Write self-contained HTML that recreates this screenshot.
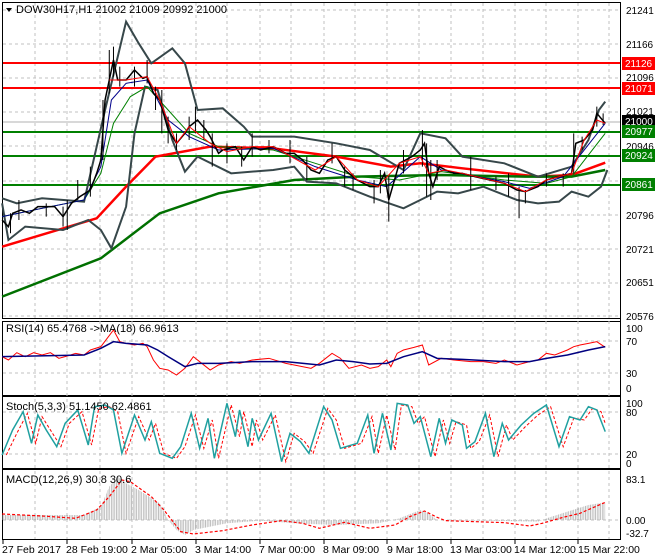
<!DOCTYPE html>
<html><head><meta charset="utf-8"><style>
html,body{margin:0;padding:0;background:#fff;}
svg{display:block;font-family:"Liberation Sans",sans-serif;}
</style></head><body>
<svg width="660" height="560" viewBox="0 0 660 560" xmlns="http://www.w3.org/2000/svg">
<defs>
<pattern id="hist" width="4" height="10" patternUnits="userSpaceOnUse"><rect x="0" y="0" width="2" height="10" fill="#b8b8b8"/></pattern>
</defs>
<rect width="660" height="560" fill="#fff"/>
<!-- panel borders -->
<g fill="none" stroke="#000" stroke-width="1">
<rect x="2.5" y="2.5" width="618" height="316"/>
<rect x="2.5" y="321.5" width="618" height="74"/>
<rect x="2.5" y="396.5" width="618" height="72"/>
<rect x="2.5" y="469.5" width="618" height="70"/>
</g>
<!-- grid -->
<g stroke="#c0c0c0" stroke-dasharray="3,3" stroke-width="1">
<line x1="35" y1="3" x2="35" y2="539"/><line x1="67" y1="3" x2="67" y2="539"/><line x1="100" y1="3" x2="100" y2="539"/><line x1="132" y1="3" x2="132" y2="539"/><line x1="164" y1="3" x2="164" y2="539"/><line x1="196" y1="3" x2="196" y2="539"/><line x1="227" y1="3" x2="227" y2="539"/><line x1="260" y1="3" x2="260" y2="539"/><line x1="291" y1="3" x2="291" y2="539"/><line x1="324" y1="3" x2="324" y2="539"/><line x1="355" y1="3" x2="355" y2="539"/><line x1="387" y1="3" x2="387" y2="539"/><line x1="419" y1="3" x2="419" y2="539"/><line x1="451" y1="3" x2="451" y2="539"/><line x1="483" y1="3" x2="483" y2="539"/><line x1="515" y1="3" x2="515" y2="539"/><line x1="546" y1="3" x2="546" y2="539"/><line x1="578" y1="3" x2="578" y2="539"/><line x1="609" y1="3" x2="609" y2="539"/>
<line x1="3" y1="10" x2="620" y2="10"/><line x1="3" y1="44" x2="620" y2="44"/><line x1="3" y1="78" x2="620" y2="78"/><line x1="3" y1="112" x2="620" y2="112"/><line x1="3" y1="146" x2="620" y2="146"/><line x1="3" y1="181" x2="620" y2="181"/><line x1="3" y1="215" x2="620" y2="215"/><line x1="3" y1="249" x2="620" y2="249"/><line x1="3" y1="283" x2="620" y2="283"/><line x1="3" y1="316" x2="620" y2="316"/>
<line x1="3" y1="341" x2="620" y2="341"/><line x1="3" y1="373" x2="620" y2="373"/>
<line x1="3" y1="412" x2="620" y2="412"/><line x1="3" y1="454" x2="620" y2="454"/>
<line x1="3" y1="520" x2="620" y2="520"/>
</g>
<!-- horizontal levels -->
<line x1="3" y1="122" x2="620" y2="122" stroke="#b0b0b0"/>
<g stroke-width="2">
<line x1="3" y1="63" x2="620" y2="63" stroke="#f00"/>
<line x1="3" y1="88" x2="620" y2="88" stroke="#f00"/>
<line x1="3" y1="132" x2="620" y2="132" stroke="#008000"/>
<line x1="3" y1="156" x2="620" y2="156" stroke="#008000"/>
<line x1="3" y1="185" x2="620" y2="185" stroke="#008000"/>
</g>
<!-- main chart in zoom coords -->
<g transform="scale(0.4203 0.3333)" fill="none">
<polyline vector-effect="non-scaling-stroke" stroke="#f00" stroke-width="2.5" points="5,740 230,655 300,560 370,470 500,440 650,445 800,470 930,500 1000,490 1100,505 1280,530 1360,525 1440,488"/>
<polyline vector-effect="non-scaling-stroke" stroke="#007000" stroke-width="2.5" points="5,890 240,775 380,640 520,580 700,540 850,530 1050,525 1250,530 1360,530 1440,510"/>
<polyline vector-effect="non-scaling-stroke" stroke="#37474a" stroke-width="2" points="5,595 40,610 100,595 200,605 250,330 300,65 330,130 360,190 410,145 440,190 470,330 530,325 580,380 600,410 700,410 800,430 880,450 960,510 1000,400 1060,415 1100,470 1200,490 1280,530 1360,500 1400,420 1425,330 1440,305"/>
<polyline vector-effect="non-scaling-stroke" stroke="#37474a" stroke-width="2" points="5,610 20,720 60,680 150,690 210,660 240,690 265,745 300,620 320,400 345,260 375,270 410,420 440,515 470,470 550,520 650,510 700,500 730,545 800,550 880,590 960,625 1000,600 1040,575 1090,580 1150,560 1230,600 1280,610 1330,605 1360,575 1400,590 1430,560 1445,510"/>
<polyline vector-effect="non-scaling-stroke" stroke="#008000" stroke-width="1" points="5,650 100,625 200,600 240,520 270,370 310,290 350,260 400,330 450,400 520,440 650,450 750,490 850,530 950,540 1050,515 1200,540 1300,550 1360,530 1440,400"/>
<polyline vector-effect="non-scaling-stroke" stroke="#00008b" stroke-width="1" points="5,650 100,625 200,600 240,500 265,300 300,250 350,240 400,360 450,410 520,450 650,445 750,500 850,540 920,560 1000,470 1050,510 1200,545 1260,565 1340,530 1440,370"/>
<polyline vector-effect="non-scaling-stroke" stroke="#000" stroke-width="1.5" points="5,660 20,680 30,640 50,630 70,640 90,620 130,620 150,650 170,610 190,590 215,570 230,520 240,480 250,300 260,240 270,180 280,240 300,240 320,210 340,235 350,230 365,280 380,300 400,390 420,430 440,400 450,380 470,360 490,390 500,410 520,460 530,450 560,440 580,480 600,440 620,450 650,440 680,460 700,460 720,480 740,510 760,520 780,480 800,470 820,510 850,540 880,560 900,560 915,520 925,600 950,490 980,470 1000,450 1010,430 1020,520 1030,560 1045,500 1060,510 1080,520 1100,520 1130,530 1200,550 1230,570 1250,575 1280,560 1300,540 1330,530 1360,520 1370,430 1390,420 1410,390 1420,340 1430,355 1440,370"/>
<g stroke="#000" stroke-width="1" vector-effect="non-scaling-stroke">
<path vector-effect="non-scaling-stroke" d="M25,640V700M45,600V660M110,610V650M150,620V680M160,600V690M185,540V600M215,500V590M245,300V480M260,150V280M270,140V230M285,200V260M320,200V260M350,180V250M370,260V330M385,270V400M400,350V430M420,400V450M450,350V420M465,320V400M485,360V420M505,400V500M540,430V490M575,440V500M600,400V470M640,420V460M690,420V490M730,470V540M790,430V490M820,500V560M840,520V570M890,540V610M905,510V580M925,530V665M960,450V520M1005,390V500M1015,430V590M1025,480V600M1040,480V540M1120,470V570M1180,530V570M1210,520V590M1235,560V655M1250,570V610M1300,520V560M1340,520V560M1365,400V520M1385,410V450M1420,320V380M1435,340V375"/>
</g>
<polyline vector-effect="non-scaling-stroke" stroke="#f00" stroke-width="1" points="260,240 300,240 350,230 380,300 420,430 450,380 500,430 540,455 600,440 650,440 750,510 800,470 850,540 900,560 950,490 1000,470 1020,520 1060,510 1100,520 1200,550 1250,575 1300,540 1360,520 1390,420 1420,360 1440,370"/>
</g>
<!-- RSI -->
<g transform="translate(0 310) scale(0.4203 0.3333)" fill="none">
<polyline vector-effect="non-scaling-stroke" stroke="#f00" stroke-width="1" points="5,140 20,150 40,128 60,140 80,128 100,135 120,128 140,145 160,138 180,130 200,135 215,120 240,110 255,85 270,60 285,95 300,100 320,105 340,100 350,110 365,150 380,175 400,180 420,195 440,175 460,140 480,160 500,180 520,165 550,155 570,160 600,150 640,145 680,160 700,165 740,175 760,160 790,130 810,145 830,175 860,165 880,175 900,170 920,150 930,170 945,130 960,120 985,112 1005,105 1020,165 1050,145 1080,150 1120,155 1150,155 1180,160 1200,150 1230,165 1260,155 1280,150 1300,130 1320,135 1350,120 1365,110 1380,105 1400,100 1420,95 1440,112"/>
<polyline vector-effect="non-scaling-stroke" stroke="#000080" stroke-width="1.5" points="5,140 200,135 240,115 270,95 300,100 350,105 375,120 400,140 440,170 470,160 520,160 600,155 680,155 760,165 800,150 840,155 880,162 920,160 960,140 1005,125 1040,145 1100,148 1200,155 1260,155 1300,145 1350,135 1400,120 1440,110"/>
</g>
<!-- Stoch -->
<g transform="translate(0 310) scale(0.4203 0.3333)" fill="none">
<polyline vector-effect="non-scaling-stroke" stroke="#f00" stroke-width="1" stroke-dasharray="3,2" points="15,435 40,370 65,310 85,400 100,320 120,360 145,410 165,340 195,305 218,405 235,295 260,290 280,305 300,430 330,320 355,390 370,340 390,430 420,445 440,410 465,315 485,415 505,330 520,445 550,285 570,380 580,305 600,410 610,330 625,390 655,315 680,455 700,370 725,395 745,430 780,295 800,330 820,415 860,400 885,320 900,430 920,315 940,420 955,285 980,290 995,340 1010,320 1035,440 1055,330 1070,400 1085,335 1110,345 1120,415 1140,395 1165,315 1185,440 1205,345 1220,390 1250,350 1280,315 1310,290 1340,410 1365,325 1390,330 1410,295 1430,305 1440,340"/>
<polyline vector-effect="non-scaling-stroke" stroke="#20a0a0" stroke-width="1.5" points="5,435 30,360 55,305 75,400 90,315 110,360 135,410 155,340 185,300 210,405 225,290 250,285 270,300 290,430 320,315 345,390 360,335 380,430 410,445 430,410 455,310 475,415 495,325 510,445 540,280 560,380 570,300 590,410 600,325 615,390 645,310 670,455 690,370 715,395 735,430 770,290 790,330 810,415 850,400 875,315 890,430 910,310 930,420 945,280 970,285 985,340 1000,320 1025,440 1045,325 1060,400 1075,330 1100,345 1110,415 1130,395 1155,310 1175,440 1195,340 1210,390 1240,345 1270,310 1300,285 1330,410 1355,320 1380,330 1400,290 1420,300 1440,365"/>
</g>
<!-- MACD -->
<g transform="translate(0 310) scale(0.4203 0.3333)">
<polygon fill="url(#hist)" points="5,630 5,615 200,615 240,590 260,530 280,500 300,520 330,540 380,580 400,630 420,660 440,675 460,660 540,640 620,632 700,640 800,645 900,640 950,625 1000,600 1020,610 1040,630 1280,635 1300,625 1400,585 1440,577 1440,630"/>
<polyline fill="none" vector-effect="non-scaling-stroke" stroke="#f00" stroke-width="1.2" stroke-dasharray="3,2" points="5,612 100,618 180,625 230,600 260,560 290,510 310,515 360,560 390,600 430,665 460,672 530,662 600,645 670,632 720,640 760,655 820,637 880,655 940,645 975,620 1010,603 1040,622 1060,632 1200,638 1260,648 1290,640 1340,622 1380,610 1440,577"/>
</g>
<!-- labels -->
<g font-size="11" fill="#000">
<path d="M6,8 L12,8 L9,12 Z" fill="#000"/>
<text x="16" y="13">DOW30H17,H1  21002 21009 20992 21000</text>
<text x="6" y="332">RSI(14) 65.4768  -&gt;MA(18) 66.9613</text>
<text x="6" y="410">Stoch(5,3,3) 51.1450 62.4861</text>
<text x="6" y="483">MACD(12,26,9) 30.8 30.6</text>
</g>
<g font-size="10" fill="#000">
<text x="626" y="14">21241</text><text x="626" y="48">21166</text><text x="626" y="81">21096</text><text x="626" y="115">21021</text><text x="626" y="150">20946</text><text x="626" y="219">20796</text><text x="626" y="253">20721</text><text x="626" y="286">20651</text><text x="626" y="320">20576</text>
<text x="626" y="332">100</text><text x="626" y="345">70</text><text x="626" y="377">30</text><text x="626" y="392">0</text>
<text x="626" y="407">100</text><text x="626" y="416">80</text><text x="626" y="458">20</text><text x="626" y="467">0</text>
<text x="626" y="483">83.1</text><text x="626" y="524">0.00</text><text x="626" y="537">-32.7</text>
</g>
<g stroke="#000"><line x1="620.5" y1="3" x2="620.5" y2="540"/></g>
<rect x="622" y="57" width="33" height="13" fill="#f00"/><text x="625" y="67" font-size="10" fill="#fff">21126</text>
<rect x="622" y="82" width="33" height="13" fill="#f00"/><text x="625" y="92" font-size="10" fill="#fff">21071</text>
<rect x="622" y="115" width="33" height="13" fill="#000"/><text x="625" y="125" font-size="10" fill="#fff">21000</text>
<rect x="622" y="125" width="33" height="13" fill="#008000"/><text x="625" y="135" font-size="10" fill="#fff">20977</text>
<rect x="622" y="149" width="33" height="13" fill="#008000"/><text x="625" y="159" font-size="10" fill="#fff">20924</text>
<rect x="622" y="178" width="33" height="13" fill="#008000"/><text x="625" y="188" font-size="10" fill="#fff">20861</text>
<g stroke="#000"><line x1="3" y1="540" x2="3" y2="544"/><line x1="67" y1="540" x2="67" y2="544"/><line x1="132" y1="540" x2="132" y2="544"/><line x1="196" y1="540" x2="196" y2="544"/><line x1="260" y1="540" x2="260" y2="544"/><line x1="324" y1="540" x2="324" y2="544"/><line x1="387" y1="540" x2="387" y2="544"/><line x1="451" y1="540" x2="451" y2="544"/><line x1="515" y1="540" x2="515" y2="544"/><line x1="578" y1="540" x2="578" y2="544"/></g>
<g font-size="10.5" fill="#000">
<text x="2" y="553">27 Feb 2017</text><text x="66" y="553">28 Feb 19:00</text><text x="131" y="553">2 Mar 05:00</text><text x="195" y="553">3 Mar 14:00</text><text x="259" y="553">7 Mar 00:00</text><text x="323" y="553">8 Mar 09:00</text><text x="387" y="553">9 Mar 18:00</text><text x="450" y="553">13 Mar 03:00</text><text x="514" y="553">14 Mar 12:00</text><text x="578" y="553">15 Mar 22:00</text>
</g>
</svg>
</body></html>
